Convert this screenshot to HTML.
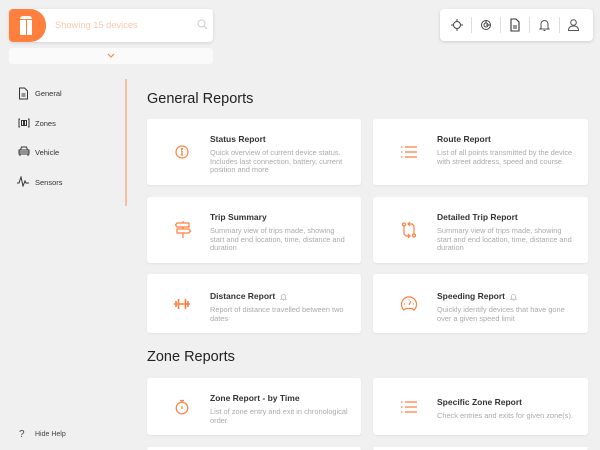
<!DOCTYPE html>
<html><head><meta charset="utf-8"><style>
*{box-sizing:border-box;margin:0;padding:0}
html,body{width:600px;height:450px;overflow:hidden}
body{background:#f0f0f0;font-family:"Liberation Sans",sans-serif;position:relative}
.abs{position:absolute}
.card{position:absolute;background:#fff;border-radius:3px;box-shadow:0 1px 2px rgba(0,0,0,.06)}
.card .ic{position:absolute;top:50%;transform:translate(-50%,-50%)}
.card .t{position:absolute;font-size:8.5px;font-weight:bold;color:#333;white-space:nowrap}
.card .d{position:absolute;font-size:7.4px;line-height:8.6px;color:#aaa}
.nav{position:absolute;left:35px;font-size:7.5px;color:#333}
h2{position:absolute;font-size:14.5px;font-weight:normal;color:#222;left:147px}
.bell{display:inline-block;vertical-align:middle;margin-left:5px}
</style></head><body>
<div class="abs" style="left:9px;top:9px;width:204px;height:33px;background:#fff;border-radius:4px;box-shadow:0 1px 3px rgba(0,0,0,.12)"></div>
<div class="abs" style="left:9px;top:9px;width:37px;height:33px;background:#ff7f3f;border-radius:4px 16px 16px 4px"></div>
<div class="abs" style="left:20px;top:16px;width:12px;height:19px;background:#fff;border-radius:3px 3px 1px 1px"></div>
<div class="abs" style="left:25.5px;top:19px;width:1.2px;height:16px;background:#ff7f3f"></div>
<div class="abs" style="left:20px;top:19px;width:12px;height:1.2px;background:#ff7f3f"></div>
<div class="abs" style="left:55px;top:19.5px;font-size:9.3px;color:#fcc9ae">Showing 15 devices</div>
<svg class="abs" style="left:197px;top:19px" width="11" height="11" viewBox="0 0 11 11"><circle cx="4.5" cy="4.5" r="3.5" fill="none" stroke="#ccc" stroke-width="1"/><path d="M7 7l3 3" stroke="#ccc" stroke-width="1"/></svg>
<div class="abs" style="left:9px;top:48px;width:204px;height:16px;background:#fafafa;border-radius:3px"></div>
<svg class="abs" style="left:107px;top:53px" width="8" height="5"><path d="M1 1l3 3 3-3" fill="none" stroke="#ff7f3f" stroke-width="1"/></svg>
<div class="abs" style="left:440px;top:9px;width:153px;height:32px;background:#fff;border-radius:4px;box-shadow:0 1px 3px rgba(0,0,0,.15)"></div>
<div class="abs" style="left:471px;top:17px;width:1px;height:16px;background:#ddd"></div>
<div class="abs" style="left:500px;top:17px;width:1px;height:16px;background:#ddd"></div>
<div class="abs" style="left:529px;top:17px;width:1px;height:16px;background:#ddd"></div>
<div class="abs" style="left:559px;top:17px;width:1px;height:16px;background:#ddd"></div>
<svg class="abs" style="left:450px;top:18px" width="14" height="14" viewBox="0 0 14 14" fill="none" stroke="#444" stroke-width="1"><circle cx="7" cy="7" r="3.5"/><path d="M7 1v2.5M7 10.5V13M1 7h2.5M10.5 7H13"/></svg>
<svg class="abs" style="left:480px;top:19px" width="12" height="12" viewBox="0 0 12 12" fill="none" stroke="#444" stroke-width="1"><circle cx="6" cy="6" r="4.5"/><circle cx="6" cy="6" r="2"/><path d="M6 1.5v2.5M6 6h4"/></svg>
<svg class="abs" style="left:509px;top:18px" width="12" height="14" viewBox="0 0 12 14" fill="none" stroke="#333" stroke-width="1.1"><path d="M2 1h5l3 3v9H2z"/><path d="M4 8h4M4 10h4"/></svg>
<svg class="abs" style="left:538px;top:18px" width="13" height="14" viewBox="0 0 13 14" fill="none" stroke="#555" stroke-width="1"><path d="M3 10V6a3.5 3.5 0 017 0v4l1 1H2z"/><path d="M5.5 12.5h2"/></svg>
<svg class="abs" style="left:567px;top:18px" width="13" height="14" viewBox="0 0 13 14" fill="none" stroke="#555" stroke-width="1"><circle cx="6.5" cy="4.5" r="2.8"/><path d="M1.5 12.5c0-3 2-4.5 5-4.5s5 1.5 5 4.5z"/></svg>
<div class="abs" style="left:125px;top:79px;width:1.5px;height:127px;background:#f5c0a0"></div>
<svg class="abs" style="left:18px;top:87px" width="11" height="13" viewBox="0 0 11 13" fill="none" stroke="#333" stroke-width="1"><path d="M1.5 1h5l3 3v8h-8z"/><path d="M3.5 7h4M3.5 9h4"/></svg>
<div class="nav" style="top:89px">General</div>
<svg class="abs" style="left:18px;top:118px" width="12" height="10" viewBox="0 0 12 10" fill="none" stroke="#333" stroke-width="1"><path d="M2 1H1v8h1M10 1h1v8h-1"/><rect x="3.5" y="2.5" width="2" height="5"/><rect x="6.5" y="2.5" width="2" height="5"/></svg>
<div class="nav" style="top:119px">Zones</div>
<svg class="abs" style="left:18px;top:146px" width="12" height="11" viewBox="0 0 12 11" fill="none" stroke="#333" stroke-width="1"><path d="M2.5 4l1-3h5l1 3M1 4h10v4H1zM2 8v2M10 8v2M1 6h10"/></svg>
<div class="nav" style="top:148px">Vehicle</div>
<svg class="abs" style="left:17px;top:176px" width="13" height="11" viewBox="0 0 13 11" fill="none" stroke="#333" stroke-width="1"><path d="M0 7h2l2-6 2 9 2-5 1 2h3"/></svg>
<div class="nav" style="top:178px">Sensors</div>
<div class="abs" style="left:19px;top:429px;font-size:10px;color:#444">?</div>
<div class="abs" style="left:35px;top:431px;font-size:7px;color:#444">Hide Help</div>

<h2 style="top:91px">General Reports</h2>
<h2 style="top:349px">Zone Reports</h2>

<div class="card" style="left:147px;top:119px;width:214px;height:66px">
<svg class="ic" style="left:35px" width="14" height="14" viewBox="0 0 14 14" fill="none" stroke="#ff7f3f" stroke-width="1.2"><circle cx="7" cy="7" r="6"/><path d="M7 6v4M6 10h2M6 6h1"/><circle cx="7" cy="4" r=".5"/></svg>
<div class="t" style="left:63px;top:15px">Status Report</div>
<div class="d" style="left:63px;top:30px;width:140px">Quick overview of current device status. Includes last connection, battery, current position and more</div></div>

<div class="card" style="left:373px;top:119px;width:215px;height:66px">
<svg class="ic" style="left:36px" width="16" height="12" viewBox="0 0 16 12" fill="none" stroke="#ff7f3f" stroke-width="1.2"><path d="M0 1h1.5M0 6h1.5M0 11h1.5M4 1h12M4 6h12M4 11h12"/></svg>
<div class="t" style="left:64px;top:15px">Route Report</div>
<div class="d" style="left:64px;top:30px;width:140px">List of all points transmitted by the device with street address, speed and course</div></div>

<div class="card" style="left:147px;top:197px;width:214px;height:66px">
<svg class="ic" style="left:36px" width="18" height="18" viewBox="0 0 18 18" fill="none" stroke="#ff7f3f" stroke-width="1.2"><path d="M3 2h12v4H3L1.5 4zM3 8h12l1.5 2L15 12H3zM9 6v2M9 12v5M9 0v2"/></svg>
<div class="t" style="left:63px;top:15px">Trip Summary</div>
<div class="d" style="left:63px;top:30px;width:140px">Summary view of trips made, showing start and end location, time, distance and duration</div></div>

<div class="card" style="left:373px;top:197px;width:215px;height:66px">
<svg class="ic" style="left:36px" width="16" height="16" viewBox="0 0 16 16" fill="none" stroke="#ff7f3f" stroke-width="1.2"><circle cx="3" cy="2.5" r="1.5"/><circle cx="13" cy="13.5" r="1.5"/><path d="M3 4v8l2 2h4M7 12l2 2-2 2M13 12V4l-2-2H7M9 0L7 2l2 2"/></svg>
<div class="t" style="left:64px;top:15px">Detailed Trip Report</div>
<div class="d" style="left:64px;top:30px;width:140px">Summary view of trips made, showing start and end location, time, distance and duration</div></div>

<div class="card" style="left:147px;top:274px;width:214px;height:59px">
<svg class="ic" style="left:35px" width="18" height="12" viewBox="0 0 18 12" fill="none" stroke="#ff7f3f" stroke-width="1.6"><path d="M1 6h16M3 3v6M5.5 1v10M12.5 1v10M15 3v6"/></svg>
<div class="t" style="left:63px;top:17px">Distance Report<svg class="bell" width="7" height="8" viewBox="0 0 7 8" fill="none" stroke="#bbb" stroke-width=".8"><path d="M1.5 5.5V3.5a2 2 0 014 0v2l.8.8H.7z"/><path d="M3 7.3h1"/></svg></div>
<div class="d" style="left:63px;top:32px;width:140px">Report of distance travelled between two dates</div></div>

<div class="card" style="left:373px;top:274px;width:215px;height:59px">
<svg class="ic" style="left:36px" width="18" height="16" viewBox="0 0 18 16" fill="none" stroke="#ff7f3f" stroke-width="1.2"><path d="M4 14A7.5 7.5 0 1114 14l-2-1.5H6z"/><path d="M9 9l2-4M4 8h1M13 8h1M9 3.5v1"/></svg>
<div class="t" style="left:64px;top:17px">Speeding Report<svg class="bell" width="7" height="8" viewBox="0 0 7 8" fill="none" stroke="#bbb" stroke-width=".8"><path d="M1.5 5.5V3.5a2 2 0 014 0v2l.8.8H.7z"/><path d="M3 7.3h1"/></svg></div>
<div class="d" style="left:64px;top:32px;width:140px">Quickly identify devices that have gone over a given speed limit</div></div>

<div class="card" style="left:147px;top:378px;width:214px;height:57px">
<svg class="ic" style="left:35px" width="14" height="16" viewBox="0 0 14 16" fill="none" stroke="#ff7f3f" stroke-width="1.2"><circle cx="7" cy="9" r="5.8"/><path d="M5 1.5h4M7 1.5v2M7 7v3"/></svg>
<div class="t" style="left:63px;top:15px">Zone Report - by Time</div>
<div class="d" style="left:63px;top:30px;width:140px">List of zone entry and exit in chronological order</div></div>

<div class="card" style="left:373px;top:378px;width:215px;height:57px">
<svg class="ic" style="left:36px" width="16" height="12" viewBox="0 0 16 12" fill="none" stroke="#ff7f3f" stroke-width="1.2"><path d="M0 1h1.5M0 6h1.5M0 11h1.5M4 1h12M4 6h12M4 11h12"/></svg>
<div class="t" style="left:64px;top:19px">Specific Zone Report</div>
<div class="d" style="left:64px;top:34px;width:145px">Check entries and exits for given zone(s).</div></div>

<div class="card" style="left:147px;top:447px;width:214px;height:3px"></div>
<div class="card" style="left:373px;top:447px;width:215px;height:3px"></div>
</body></html>
